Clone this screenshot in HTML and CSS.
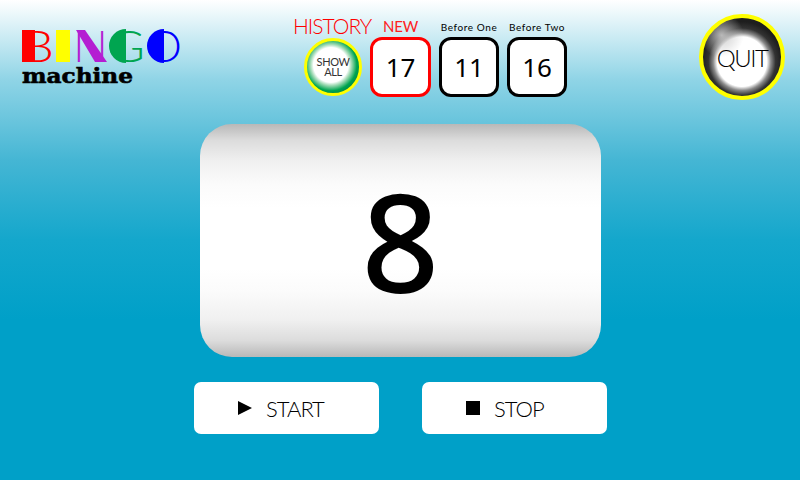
FILE: index.html
```html
<html>

<head>
  <link rel="stylesheet" href="styles.css">
</head>

<body>
  <div class="header">
    <svg class="logo" xmlns="http://www.w3.org/2000/svg" width="162" height="74" viewBox="0 -16 162 74">
      <!-- filled halves of the letters -->
      <rect x="1" y="1" width="13" height="32" fill="#ff0000" />
      <rect x="35" y="1" width="14" height="32" fill="#ffff00" />
      <polygon points="55,1 64,1 86,33 74,33" fill="#b41ed2" />
      <path d="M105,0 A17,17 0 0 0 105,34 Z" fill="#00a550" />
      <path d="M143,0 A17,17 0 0 0 143,34 Z" fill="#0000ff" />
      <g class="logo-letters">
        <text x="0" y="33" font-size="44" fill="#ff0000" textLength="33" lengthAdjust="spacingAndGlyphs">B</text>
        <text x="35" y="33" font-size="44" fill="#ffff00" textLength="14" lengthAdjust="spacingAndGlyphs">I</text>
        <text x="52" y="33" font-size="44" fill="#b41ed2" textLength="35" lengthAdjust="spacingAndGlyphs">N</text>
        <text x="88" y="33" font-size="44" fill="#00a550" textLength="36" lengthAdjust="spacingAndGlyphs">G</text>
        <text x="125" y="33" font-size="44" fill="#0000ff" textLength="36" lengthAdjust="spacingAndGlyphs">O</text>
      </g>
      <text class="logo-sub" x="1" y="54" font-size="21" textLength="111" lengthAdjust="spacingAndGlyphs">machine</text>
    </svg>

    <div class="history">
      <div class="label-history">HISTORY</div>
      <div class="label-new">NEW</div>
      <div class="label-before">Before One</div>
      <div class="label-before">Before Two</div>

      <div class="show-all"><span>SHOW<br>ALL</span></div>
      <div class="card card-new">17</div>
      <div class="card">11</div>
      <div class="card">16</div>
    </div>

    <div class="quit"><span>QUIT</span></div>
  </div>

  <div class="display">8</div>

  <div class="controls">
    <div class="btn">
      <svg class="btn-icon" xmlns="http://www.w3.org/2000/svg" width="14" height="14" viewBox="0 0 14 14">
        <polygon points="0,0 14,7 0,14" fill="black" />
      </svg>
      <span>START</span>
    </div>
    <div class="btn">
      <svg class="btn-icon" xmlns="http://www.w3.org/2000/svg" width="14" height="14" viewBox="0 0 14 14">
        <rect width="14" height="14" fill="black" />
      </svg>
      <span>STOP</span>
    </div>
  </div>
</body>

</html>
```

FILE: styles.css
```css
body {
  margin: 0;
  width: 800px;
  height: 480px;
  overflow: hidden;
  font-family: "Lato", sans-serif;
  background: linear-gradient(#ffffff 0, #8fd4e6 80px, #45b6d4 160px, #14a7cc 240px, #00a0c8 320px);
}

.header {
  display: grid;
  grid-template-columns: 272px 1fr auto;
  height: 124px;
  box-sizing: border-box;
  padding: 14px 15px 0 21px;
}

.logo {
  margin-top: -1px;
}

.logo-letters {
  font-family: "Lato", sans-serif;
  font-weight: 300;
}

.logo-sub {
  font-family: "DejaVu Serif", serif;
  font-weight: bold;
  stroke: black;
  stroke-width: .6;
}

/* History block */
.history {
  display: grid;
  grid-template-columns: 69px 61px 60px 60px;
  grid-template-rows: 23px 60px;
  column-gap: 8px;
  align-self: start;
}

.label-history {
  font-size: 21px;
  font-weight: 300;
  line-height: 23px;
  letter-spacing: -1px;
  color: #ff0000;
  white-space: nowrap;
}

.label-new {
  font-size: 15px;
  line-height: 24px;
  letter-spacing: -.2px;
  color: #ff2020;
  text-align: center;
}

.label-before {
  font-size: 10px;
  line-height: 26px;
  letter-spacing: .6px;
  color: black;
  text-align: center;
  white-space: nowrap;
}

.show-all {
  display: flex;
  align-items: center;
  justify-content: center;
  justify-self: end;
  width: 58px;
  height: 58px;
  margin-top: 1px;
  box-sizing: border-box;
  border: 3px solid #ffff00;
  border-radius: 50%;
  background: radial-gradient(circle 30px at 46% 46%, #fff 0, #fff 58%, #a5dcb8 68%, #00a550 86%, #00864a 100%);
  font-size: 11px;
  font-weight: 400;
  line-height: 10px;
  letter-spacing: -.4px;
  text-align: center;
  color: #333;
}

.card {
  display: flex;
  align-items: center;
  justify-content: center;
  box-sizing: border-box;
  border: 3px solid black;
  border-radius: 12px;
  background: white;
  font-family: "Noto Sans", sans-serif;
  font-size: 26px;
  color: black;
}

.card-new {
  border-color: #ff0000;
}

.quit {
  display: flex;
  align-items: center;
  justify-content: center;
  align-self: start;
  width: 86px;
  height: 86px;
  box-sizing: border-box;
  border: 4px solid #ffff00;
  border-radius: 50%;
  background:
    radial-gradient(circle 22px at 24% 22%, rgba(200, 200, 200, .9) 0, rgba(200, 200, 200, 0) 100%),
    radial-gradient(circle 40px at 50% 56%, #fff 0, #fff 62%, #8a8a8a 72%, #333 84%, #1e1e1e 100%);
  font-size: 24px;
  font-weight: 300;
  letter-spacing: -1.5px;
  color: black;
}

/* Big number */
.display {
  display: flex;
  align-items: center;
  justify-content: center;
  width: 401px;
  height: 233px;
  margin-left: 200px;
  border-radius: 32px;
  background: linear-gradient(#b8b8b8 0, #dcdcdc 7%, #f0f0f0 16%, #fbfbfb 26%, #ffffff 36%, #ffffff 62%, #fbfbfb 72%, #f0f0f0 84%, #dcdcdc 93%, #b8b8b8 100%);
  font-family: "Noto Sans", sans-serif;
  font-size: 136px;
  font-weight: 500;
  color: black;
}

/* Start and stop */
.controls {
  display: flex;
  gap: 43px;
  margin: 25px 0 0 194px;
}

.btn {
  display: flex;
  align-items: center;
  width: 185px;
  height: 52px;
  box-sizing: border-box;
  padding-left: 44px;
  border-radius: 7px;
  background: white;
  font-size: 22px;
  font-weight: 300;
  letter-spacing: -1px;
  color: black;
}

.btn-icon {
  margin-right: 14px;
}
```
